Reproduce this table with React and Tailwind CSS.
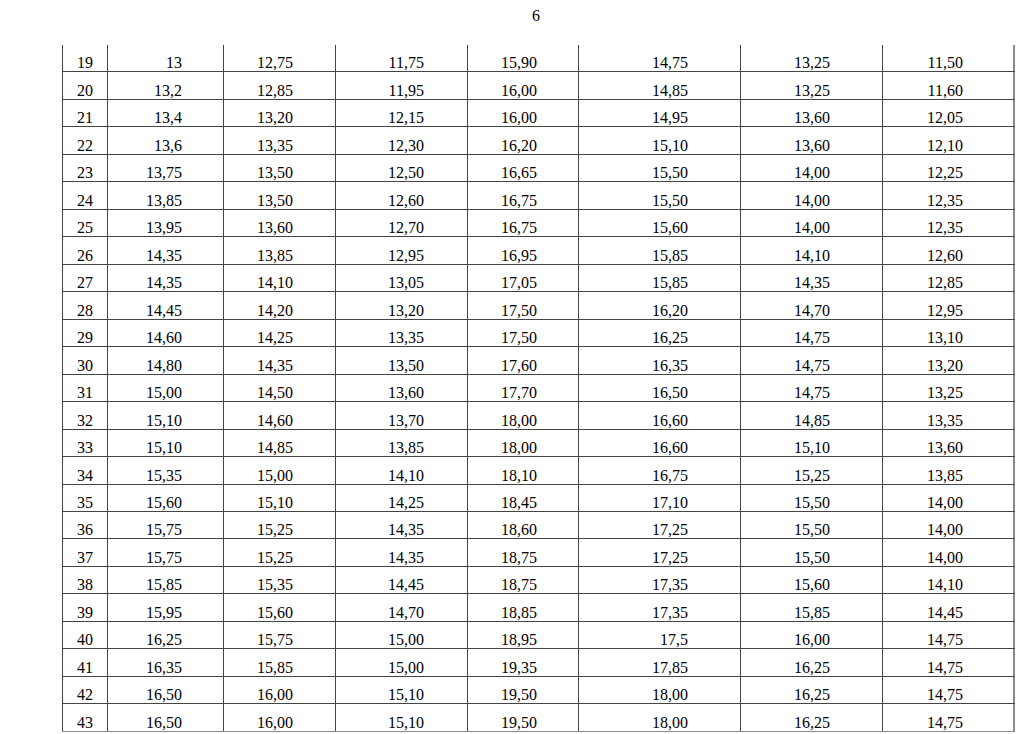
const rows = [
  ['19', '13', '12,75', '11,75', '15,90', '14,75', '13,25', '11,50'],
  ['20', '13,2', '12,85', '11,95', '16,00', '14,85', '13,25', '11,60'],
  ['21', '13,4', '13,20', '12,15', '16,00', '14,95', '13,60', '12,05'],
  ['22', '13,6', '13,35', '12,30', '16,20', '15,10', '13,60', '12,10'],
  ['23', '13,75', '13,50', '12,50', '16,65', '15,50', '14,00', '12,25'],
  ['24', '13,85', '13,50', '12,60', '16,75', '15,50', '14,00', '12,35'],
  ['25', '13,95', '13,60', '12,70', '16,75', '15,60', '14,00', '12,35'],
  ['26', '14,35', '13,85', '12,95', '16,95', '15,85', '14,10', '12,60'],
  ['27', '14,35', '14,10', '13,05', '17,05', '15,85', '14,35', '12,85'],
  ['28', '14,45', '14,20', '13,20', '17,50', '16,20', '14,70', '12,95'],
  ['29', '14,60', '14,25', '13,35', '17,50', '16,25', '14,75', '13,10'],
  ['30', '14,80', '14,35', '13,50', '17,60', '16,35', '14,75', '13,20'],
  ['31', '15,00', '14,50', '13,60', '17,70', '16,50', '14,75', '13,25'],
  ['32', '15,10', '14,60', '13,70', '18,00', '16,60', '14,85', '13,35'],
  ['33', '15,10', '14,85', '13,85', '18,00', '16,60', '15,10', '13,60'],
  ['34', '15,35', '15,00', '14,10', '18,10', '16,75', '15,25', '13,85'],
  ['35', '15,60', '15,10', '14,25', '18,45', '17,10', '15,50', '14,00'],
  ['36', '15,75', '15,25', '14,35', '18,60', '17,25', '15,50', '14,00'],
  ['37', '15,75', '15,25', '14,35', '18,75', '17,25', '15,50', '14,00'],
  ['38', '15,85', '15,35', '14,45', '18,75', '17,35', '15,60', '14,10'],
  ['39', '15,95', '15,60', '14,70', '18,85', '17,35', '15,85', '14,45'],
  ['40', '16,25', '15,75', '15,00', '18,95', '17,5', '16,00', '14,75'],
  ['41', '16,35', '15,85', '15,00', '19,35', '17,85', '16,25', '14,75'],
  ['42', '16,50', '16,00', '15,10', '19,50', '18,00', '16,25', '14,75'],
  ['43', '16,50', '16,00', '15,10', '19,50', '18,00', '16,25', '14,75'],
]

// column cell classes: width set by the grid, text pushed to the right
const cellCls = [
  'justify-center',
  'justify-end pr-[41px]',
  'justify-end pr-[42px]',
  'justify-end pr-[43px]',
  'justify-end pr-[41px]',
  'justify-end pr-[52px]',
  'justify-end pr-[52px]',
  'justify-end pr-[50px] border-r-2 border-r-[#8a8a8a]',
]

export default function App() {
  return (
    <div className="w-[1020px] h-[734px] bg-white text-black overflow-hidden font-['Liberation_Serif','Times_New_Roman',serif]">
      {/* page number */}
      <div className="pt-[7px] pl-[532px] text-[16px] leading-[18px]">6</div>

      {/* table */}
      <div className="mt-[20px] ml-[62px] w-[953px]">
        {rows.map((r, i) => (
          <div
            key={r[0]}
            className={
              'grid grid-cols-[45px_116px_112px_132px_111px_162px_142px_133px] h-[27.48px] border-b ' +
              (i === rows.length - 1 ? 'border-[#8a8a8a]' : 'border-[#444]')
            }
          >
            {r.map((v, j) => (
              <div key={j} className={'flex items-end border-l border-[#444] text-[16px] leading-[16px] ' + cellCls[j]}>
                {v}
              </div>
            ))}
          </div>
        ))}
      </div>
    </div>
  )
}
